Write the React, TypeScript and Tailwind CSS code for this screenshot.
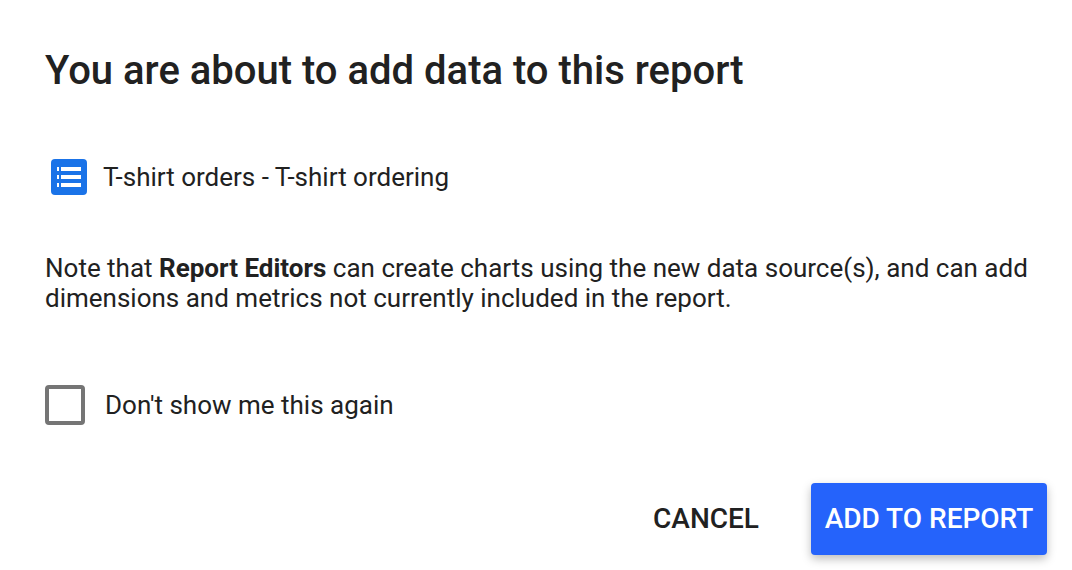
import type { ReactNode } from "react";

function DataSourceIcon() {
  return (
    <svg aria-hidden="true" className="size-9 shrink-0" viewBox="0 0 36 36">
      <rect fill="#1a73e8" height="36" rx="4" width="36" />
      <path d="M6 8h2v4H6zM10 8h20v4H10zM6 16h2v4H6zM10 16h20v4H10zM6 24h2v4H6zM10 24h20v4H10z" fill="#fff" />
    </svg>
  );
}

function DialogActions({ children }: { children: ReactNode }) {
  return <div className="mt-[58px] flex items-center justify-end gap-10">{children}</div>;
}

export default function App() {
  return (
    <main
      aria-labelledby="dialog-title"
      className="bg-white pt-[47px] pr-[25px] pb-[15px] pl-[45px] font-['Roboto',sans-serif] text-[26px] leading-[30px] text-[#212121]"
      role="dialog"
    >
      <h1 className="text-[40px] leading-12 font-medium" id="dialog-title">
        You are about to add data to this report
      </h1>

      <div className="mt-16 flex items-center gap-4 pl-1.5">
        <DataSourceIcon />
        <span>T-shirt orders - T-shirt ordering</span>
      </div>

      <p className="mt-[58px]">
        Note that <strong className="font-bold">Report Editors</strong> can create charts using the new data source(s),
        and can add dimensions and metrics not currently included in the report.
      </p>

      <label className="mt-[72px] flex w-fit items-center gap-5">
        <input
          className="size-10 shrink-0 appearance-none rounded-sm border-4 border-[#757575] bg-white checked:bg-[#2563fb]"
          type="checkbox"
        />
        <span>Don't show me this again</span>
      </label>

      <DialogActions>
        <button className="h-[72px] px-3 text-[28px] font-medium" type="button">
          CANCEL
        </button>
        <button
          className="h-[72px] min-w-[236px] rounded-sm bg-[#2563fb] px-3 text-[28px] font-medium text-white shadow-[0_4px_10px_rgba(0,0,0,0.26)]"
          type="button"
        >
          ADD TO REPORT
        </button>
      </DialogActions>
    </main>
  );
}
